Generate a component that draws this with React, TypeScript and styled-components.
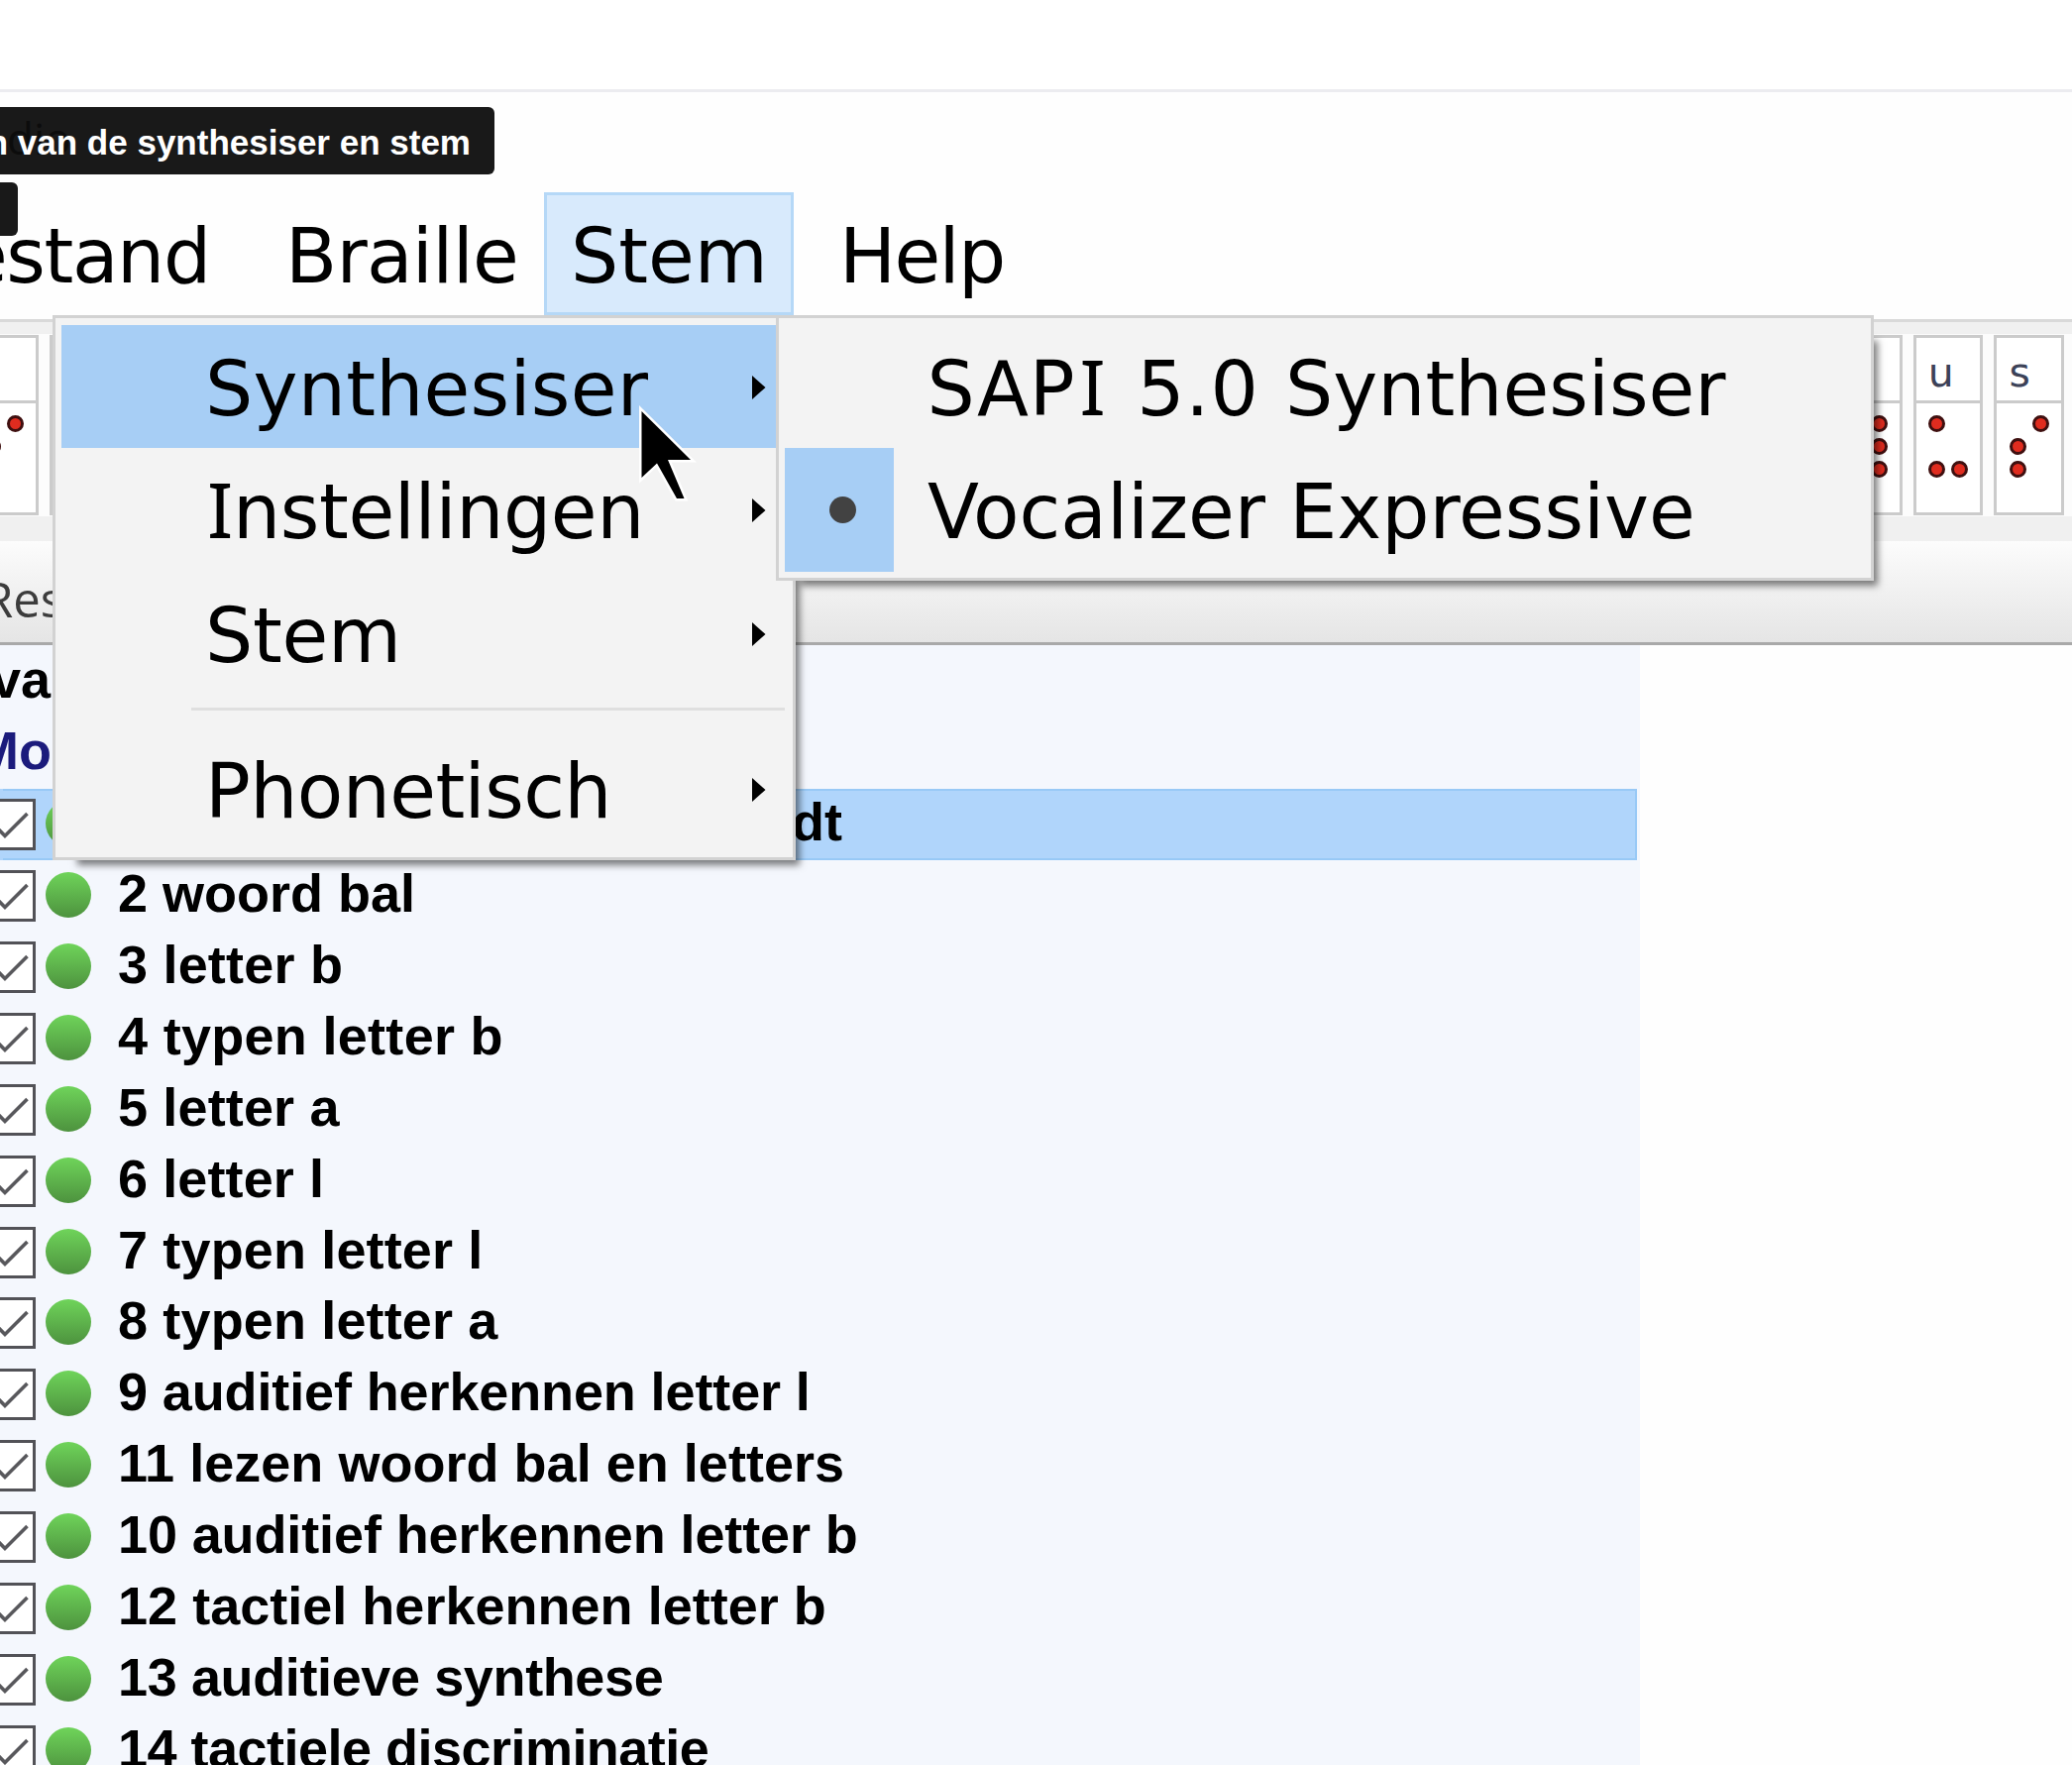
import React from "react";
import styled, { createGlobalStyle } from "styled-components";

const menuFont = `"DejaVu Sans", Verdana, sans-serif`;
const listFont = `"Liberation Sans", Arial, sans-serif`;
const uiFont = `"Open Sans", "Noto Sans", sans-serif`;

const GlobalStyle = createGlobalStyle`
  *, *::before, *::after { box-sizing: border-box; }
  body { margin: 0; background: #fff; }
`;

const Screen = styled.div`
  position: relative;
  display: flex;
  flex-direction: column;
  width: 2091px;
  height: 1781px;
  overflow: hidden;
  background: #fefefe;
  color: #000;
  white-space: pre;
`;

const PageHeader = styled.div`
  flex: none;
  height: 93px;
  background: #fff;
  border-bottom: 3px solid #ececf0;
`;

const TitleBar = styled.div`
  flex: none;
  height: 101px;
  padding: 12px 0 0 7px;
  font: 44px/69px ${uiFont};
  color: #777;
`;

const MenuBar = styled.nav`
  flex: none;
  display: flex;
  height: 128px;
`;

const MenuBarItem = styled.div<{ $width: number; $pad: number; $spacing?: number; $open?: boolean }>`
  flex: none;
  width: ${(p) => p.$width}px;
  height: 124px;
  padding: 2px 0 0 ${(p) => p.$pad}px;
  font: 76px/120px ${menuFont};
  letter-spacing: ${(p) => p.$spacing ?? 0}px;
  border: 3px solid ${(p) => (p.$open ? "#b5d8f7" : "transparent")};
  background: ${(p) => (p.$open ? "#d8eafc" : "transparent")};
`;

const Outdent = styled.span<{ $by: number }>`
  margin-left: -${(p) => p.$by}px;
`;

const Toolbar = styled.div`
  flex: none;
  height: 224px;
  padding-top: 12px;
  border-top: 3px solid #d9d9d9;
  background: #f0f0f0;
`;

const CellStrip = styled.div`
  display: flex;
  justify-content: space-between;
  height: 184px;
  padding: 1px 8px 0 0;
  background: #fcfcfc;
`;

const CellGroup = styled.div<{ $shift?: number }>`
  display: flex;
  gap: 11px;
  margin-left: -${(p) => p.$shift ?? 0}px;
`;

const BrailleCell = styled.div`
  display: flex;
  flex-direction: column;
  width: 70.6px;
  height: 182px;
  border: 3px solid #cbcbcb;
  background: #fff;
`;

const CellLetter = styled.div`
  height: 66px;
  padding: 4px 0 0 12px;
  border-bottom: 3px solid #cbcbcb;
  font: 41px/63px ${menuFont};
  color: #3c4258;
`;

const DotGrid = styled.div`
  display: grid;
  grid-template-columns: 17px 17px;
  grid-auto-rows: 17px;
  gap: 6px;
  padding: 12px 0 0 12.5px;
`;

const Dot = styled.i<{ $on: boolean }>`
  border-radius: 50%;
  border: 3px solid #3f1010;
  background: #e02c1f;
  visibility: ${(p) => (p.$on ? "visible" : "hidden")};
`;

const TabBar = styled.div`
  flex: none;
  height: 105px;
  padding-top: 8px;
  border-bottom: 3px solid #a9a9a9;
  background: linear-gradient(#fcfcfc, #f0f0f0 52%, #e5e5e5);
  font: 49px/101px ${uiFont};
  color: #3c3c3c;
`;

const LessonList = styled.div`
  width: 1655px;
  flex: 1;
  min-height: 0;
  padding-top: 1px;
  background: #f4f7fd;
  overflow: hidden;
`;

const LessonRow = styled.div<{ $selected?: boolean; $color?: string }>`
  display: flex;
  width: 1652px;
  height: 71.95px;
  font: bold 54px/66.6px ${listFont};
  color: ${(p) => p.$color ?? "#000"};
  background: ${(p) => (p.$selected ? "#b0d5fb" : "transparent")};
  box-shadow: ${(p) => (p.$selected ? "inset 3px 0 0 #b0d5fb, inset 0 0 0 2px #98c9f6" : "none")};
`;

const CheckBox = styled.div`
  flex: none;
  width: 52px;
  height: 52px;
  margin: 10px 10px 0 -16px;
  border: 3px solid #525257;
  background: #fff;

  svg { display: block; }
`;

const Status = styled.div`
  flex: none;
  width: 46px;
  height: 46px;
  margin-top: 12px;
  border-radius: 50%;
  background: linear-gradient(#6fd45a, #4d923e);
`;

const LessonName = styled.span<{ $indent?: number; $spacing?: number }>`
  margin-left: ${(p) => p.$indent ?? 27}px;
  letter-spacing: ${(p) => p.$spacing ?? 0}px;
`;

const Popup = styled.div<{ $left: number; $width: number; $height: number }>`
  position: absolute;
  top: 318px;
  left: ${(p) => p.$left}px;
  width: ${(p) => p.$width}px;
  height: ${(p) => p.$height}px;
  padding: 7px 6px;
  border: 3px solid #d2d2d2;
  background: #f3f3f3;

  &::before {
    content: "";
    position: absolute;
    z-index: -1;
    inset: 20px -3px -3px 20px;
    box-shadow: 3px 4px 7px 1px rgba(0, 0, 0, 0.5);
  }
`;

const PopupLayer = styled.div`
  position: absolute;
  inset: 0;
  z-index: 1;
`;

const PopupFace = styled.div`
  position: absolute;
  inset: 0;
  z-index: -1;
  background: #f3f3f3;
`;

const PopupItem = styled.div<{ $active?: boolean }>`
  display: flex;
  align-items: stretch;
  height: 124.3px;
  font: 76px/120px ${menuFont};
  background: ${(p) => (p.$active ? "#a7cef5" : "transparent")};
`;

const ItemGutter = styled.div<{ $width: number; $checked?: boolean }>`
  flex: none;
  display: flex;
  align-items: center;
  justify-content: center;
  width: ${(p) => p.$width}px;
  padding-left: 6px;
  background: ${(p) => (p.$checked ? "#a7cef5" : "transparent")};
`;

const Bullet = styled.i`
  width: 27px;
  height: 27px;
  border-radius: 50%;
  background: #424242;
`;

const ItemText = styled.span<{ $indent: number; $spacing?: number }>`
  flex: 1;
  padding: 5px 0 0 ${(p) => p.$indent}px;
  letter-spacing: ${(p) => p.$spacing ?? 0}px;
`;

const WideWords = styled.span`
  letter-spacing: 0.85px;
  word-spacing: 1.5px;
`;

const SerifI = styled.span<{ $gap?: number }>`
  font-family: "Noto Sans", sans-serif;
  font-size: 77.5px;
  line-height: 0;
  margin: 0 ${(p) => p.$gap ?? 0}px;
`;

const ArrowBox = styled.div`
  display: flex;
  align-items: center;
  margin-right: 21px;
  padding-top: 2px;

  svg { display: block; }
`;

const Separator = styled.div`
  height: 3px;
  margin: 13px 2px 17px 131px;
  background: #dfdfdf;
`;

const Tooltip = styled.div<{ $top: number; $width: number; $height: number }>`
  position: absolute;
  z-index: 2;
  top: ${(p) => p.$top}px;
  left: -8px;
  display: flex;
  justify-content: flex-end;
  width: ${(p) => p.$width + 8}px;
  height: ${(p) => p.$height}px;
  padding: 2px 24px 0 0;
  border-radius: 6px;
  background: rgba(0, 0, 0, 0.9);
  color: #fff;
  font: bold 35px/68px ${listFont};
`;

const Pointer = styled.svg`
  position: absolute;
  z-index: 3;
  left: 640px;
  top: 404px;
`;

const lessons: { name: string; spacing?: number }[] = [
  { name: "2 woord bal" },
  { name: "3 letter b", spacing: 0.2 },
  { name: "4 typen letter b", spacing: 0.3 },
  { name: "5 letter a", spacing: 0.15 },
  { name: "6 letter l", spacing: 0.1 },
  { name: "7 typen letter l", spacing: 0.15 },
  { name: "8 typen letter a", spacing: 0.15 },
  { name: "9 auditief herkennen letter l", spacing: -0.12 },
  { name: "11 lezen woord bal en letters", spacing: 0.03 },
  { name: "10 auditief herkennen letter b", spacing: -0.12 },
  { name: "12 tactiel herkennen letter b", spacing: 0.02 },
  { name: "13 auditieve synthese", spacing: -0.38 },
  { name: "14 tactiele discriminatie", spacing: -0.52 },
];

function Cell({ letter, dots }: { letter?: string; dots: string }) {
  return (
    <BrailleCell>
      <CellLetter>{letter}</CellLetter>
      <DotGrid>
        {dots.split("").map((d, i) => (
          <Dot key={i} $on={d === "1"} />
        ))}
      </DotGrid>
    </BrailleCell>
  );
}

function Checked() {
  return (
    <CheckBox>
      <svg width="46" height="46" viewBox="0 0 46 46" fill="none" stroke="#58585c" strokeWidth="3.6">
        <path d="M6 22 L18 34.5 L40.5 12" />
      </svg>
    </CheckBox>
  );
}

function Arrow() {
  return (
    <ArrowBox>
      <svg width="14" height="24" viewBox="0 0 14 24">
        <path d="M0 0 L13.5 12 L0 24 Z" />
      </svg>
    </ArrowBox>
  );
}

export default function App() {
  return (
    <Screen>
      <GlobalStyle />
      <PageHeader />
      <TitleBar>dio</TitleBar>
      <MenuBar>
        <MenuBarItem $width={260} $pad={0} $spacing={-1.4}>
          <Outdent $by={42}>estand</Outdent>
        </MenuBarItem>
        <MenuBarItem $width={289} $pad={25} $spacing={-0.7}>Braille</MenuBarItem>
        <MenuBarItem $width={252} $pad={24} $open>Stem</MenuBarItem>
        <MenuBarItem $width={260} $pad={43} $spacing={-1.7}>Help</MenuBarItem>
      </MenuBar>
      <Toolbar>
        <CellStrip>
          <CellGroup $shift={32}>
            <Cell dots="011000" />
            <Cell dots="000000" />
          </CellGroup>
          <CellGroup>
            <Cell dots="010101" />
            <Cell letter="u" dots="100011" />
            <Cell letter="s" dots="011010" />
          </CellGroup>
        </CellStrip>
      </Toolbar>
      <TabBar>
        <Outdent $by={17}>Res</Outdent>
      </TabBar>
      <LessonList>
        <LessonRow>
          <LessonName $indent={-9}>va</LessonName>
        </LessonRow>
        <LessonRow $color="#1b1b7c">
          <LessonName $indent={-26}>Mo</LessonName>
        </LessonRow>
        <LessonRow $selected>
          <Checked />
          <Status />
          <LessonName $indent={707}>dt</LessonName>
        </LessonRow>
        {lessons.map((l) => (
          <LessonRow key={l.name}>
            <Checked />
            <Status />
            <LessonName $spacing={l.spacing}>{l.name}</LessonName>
          </LessonRow>
        ))}
      </LessonList>

      <PopupLayer>
        <Popup $left={53} $width={750} $height={550}>
          <PopupFace />
          <PopupItem $active>
            <ItemText $indent={145} $spacing={0.25}>Synthesiser</ItemText>
            <Arrow />
          </PopupItem>
          <PopupItem>
            <ItemText $indent={147} $spacing={-0.35}><SerifI>I</SerifI>nstellingen</ItemText>
            <Arrow />
          </PopupItem>
          <PopupItem>
            <ItemText $indent={145} $spacing={-0.3}>Stem</ItemText>
            <Arrow />
          </PopupItem>
          <Separator />
          <PopupItem>
            <ItemText $indent={145} $spacing={-0.6}>Phonetisch</ItemText>
            <Arrow />
          </PopupItem>
        </Popup>
      </PopupLayer>
      <PopupLayer>
        <Popup $left={783} $width={1108} $height={268}>
          <PopupFace />
          <PopupItem>
            <ItemGutter $width={110} />
            <ItemText $indent={33.5}>
              <WideWords>SAP<SerifI $gap={4}>I</SerifI> 5.0 </WideWords>Synthesiser
            </ItemText>
          </PopupItem>
          <PopupItem>
            <ItemGutter $width={110} $checked>
              <Bullet />
            </ItemGutter>
            <ItemText $indent={34}>Vocalizer Expressive</ItemText>
          </PopupItem>
        </Popup>
      </PopupLayer>

      <Tooltip $top={108} $width={499} $height={68}>n van de synthesiser en stem</Tooltip>
      <Tooltip $top={184} $width={18} $height={54} />

      <Pointer width="70" height="110" viewBox="0 0 70 110">
        <path
          d="M7.5 11 L57 60 H34 L50.5 99 H43 L23 63.5 L7.5 78 Z"
          fill="#000"
          stroke="#fff"
          strokeWidth="5"
          paintOrder="stroke"
        />
      </Pointer>
    </Screen>
  );
}
